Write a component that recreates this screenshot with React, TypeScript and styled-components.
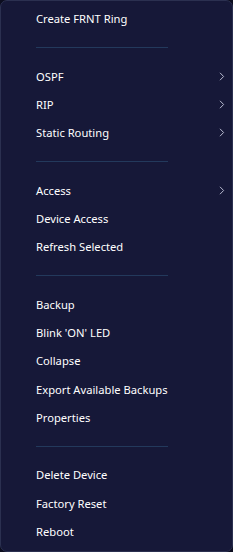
import React from 'react';
import styled, { createGlobalStyle } from 'styled-components';

const GlobalStyle = createGlobalStyle`
  html, body {
    margin: 0;
    padding: 0;
    background: #0c0d1f;
  }
  body {
    font-family: 'Noto Sans', 'Open Sans', sans-serif;
  }
`;

const Menu = styled.div`
  box-sizing: border-box;
  width: 233px;
  height: 552px;
  background: #161838;
  border: 1px solid #2b3050;
  border-radius: 7px;
  padding-top: 3.8px;
  display: flex;
  flex-direction: column;
  overflow: hidden;
`;

const Item = styled.div`
  height: 28.4px;
  display: flex;
  align-items: center;
  padding-left: 35px;
  padding-right: 7px;
  color: #ffffff;
  font-size: 11.2px;
  white-space: nowrap;
`;

const Chevron = styled.svg`
  margin-left: auto;
  width: 6px;
  height: 9px;
`;

const Separator = styled.div`
  height: 28.8px;
  display: flex;
  align-items: center;
  padding-left: 35px;

  &::after {
    content: '';
    width: 132px;
    height: 1.5px;
    background: #23395c;
  }
`;

type Entry = { label: string; sub?: boolean } | 'sep';

const entries: Entry[] = [
  { label: 'Create FRNT Ring' },
  'sep',
  { label: 'OSPF', sub: true },
  { label: 'RIP', sub: true },
  { label: 'Static Routing', sub: true },
  'sep',
  { label: 'Access', sub: true },
  { label: 'Device Access' },
  { label: 'Refresh Selected' },
  'sep',
  { label: 'Backup' },
  { label: "Blink 'ON' LED" },
  { label: 'Collapse' },
  { label: 'Export Available Backups' },
  { label: 'Properties' },
  'sep',
  { label: 'Delete Device' },
  { label: 'Factory Reset' },
  { label: 'Reboot' },
];

export default function App() {
  return (
    <>
      <GlobalStyle />
      <Menu>
        {entries.map((e, i) =>
          e === 'sep' ? (
            <Separator key={i} />
          ) : (
            <Item key={i}>
              {e.label}
              {e.sub && (
                <Chevron viewBox="0 0 6 9">
                  <path d="M1 0.8 L4.6 4.5 L1 8.2" fill="none" stroke="#b8bad0" strokeWidth="1" />
                </Chevron>
              )}
            </Item>
          )
        )}
      </Menu>
    </>
  );
}
